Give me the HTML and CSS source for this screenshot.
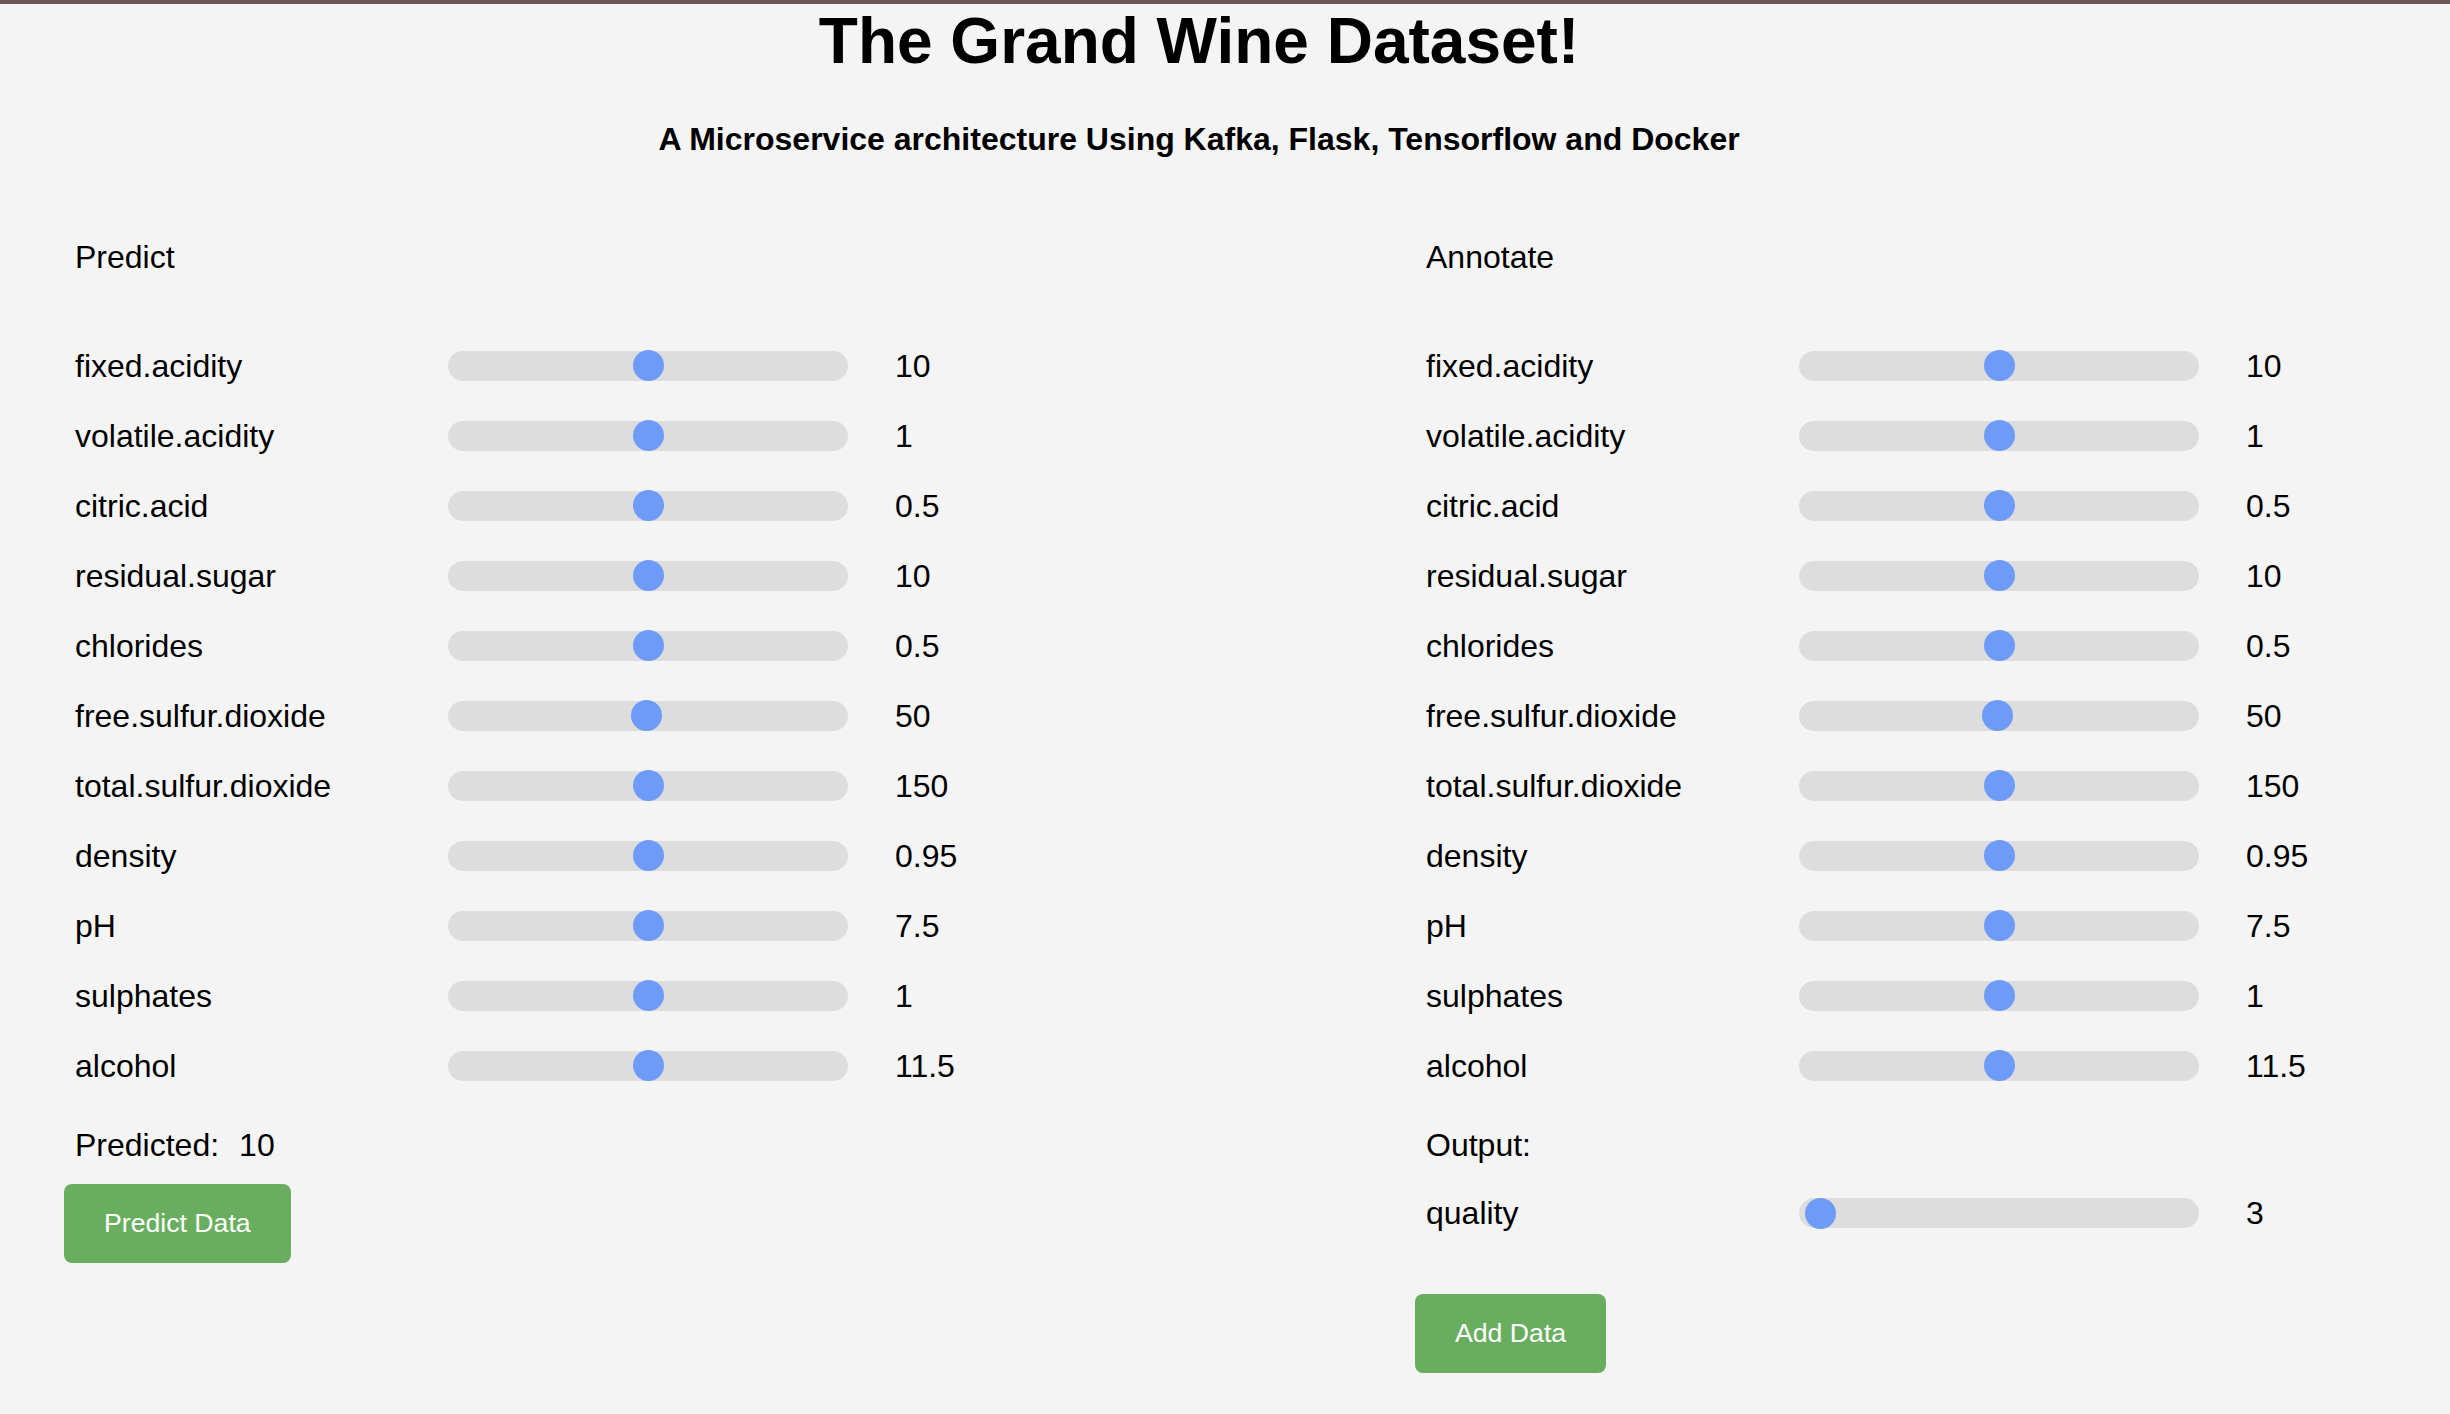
FILE: index.html
```html
<!DOCTYPE html>
<html lang="en">
<head>
<meta charset="utf-8">
<title>The Grand Wine Dataset!</title>
<link rel="stylesheet" href="styles.css">
</head>
<body>
<header class="page-header">
  <h1 class="title">The Grand Wine Dataset!</h1>
  <p class="subtitle">A Microservice architecture Using Kafka, Flask, Tensorflow and Docker</p>
</header>
<main class="panels">
  <section class="panel">
    <h2 class="panel-title">Predict</h2>
    <div class="rows">
      <div class="row"><span class="label">fixed.acidity</span><input class="slider" type="range" min="0" max="20" step="0.1" value="10"><span class="value">10</span></div>
      <div class="row"><span class="label">volatile.acidity</span><input class="slider" type="range" min="0" max="2" step="0.01" value="1"><span class="value">1</span></div>
      <div class="row"><span class="label">citric.acid</span><input class="slider" type="range" min="0" max="1" step="0.01" value="0.5"><span class="value">0.5</span></div>
      <div class="row"><span class="label">residual.sugar</span><input class="slider" type="range" min="0" max="20" step="0.1" value="10"><span class="value">10</span></div>
      <div class="row"><span class="label">chlorides</span><input class="slider" type="range" min="0" max="1" step="0.01" value="0.5"><span class="value">0.5</span></div>
      <div class="row"><span class="label">free.sulfur.dioxide</span><input class="slider" type="range" min="1" max="100" step="1" value="50"><span class="value">50</span></div>
      <div class="row"><span class="label">total.sulfur.dioxide</span><input class="slider" type="range" min="0" max="300" step="1" value="150"><span class="value">150</span></div>
      <div class="row"><span class="label">density</span><input class="slider" type="range" min="0.9" max="1" step="0.01" value="0.95"><span class="value">0.95</span></div>
      <div class="row"><span class="label">pH</span><input class="slider" type="range" min="0" max="15" step="0.1" value="7.5"><span class="value">7.5</span></div>
      <div class="row"><span class="label">sulphates</span><input class="slider" type="range" min="0" max="2" step="0.01" value="1"><span class="value">1</span></div>
      <div class="row"><span class="label">alcohol</span><input class="slider" type="range" min="8" max="15" step="0.1" value="11.5"><span class="value">11.5</span></div>
    </div>
    <p class="result">Predicted:<span class="result-value">10</span></p>
    <button class="btn btn-predict" type="button">Predict Data</button>
  </section>
  <section class="panel">
    <h2 class="panel-title">Annotate</h2>
    <div class="rows">
      <div class="row"><span class="label">fixed.acidity</span><input class="slider" type="range" min="0" max="20" step="0.1" value="10"><span class="value">10</span></div>
      <div class="row"><span class="label">volatile.acidity</span><input class="slider" type="range" min="0" max="2" step="0.01" value="1"><span class="value">1</span></div>
      <div class="row"><span class="label">citric.acid</span><input class="slider" type="range" min="0" max="1" step="0.01" value="0.5"><span class="value">0.5</span></div>
      <div class="row"><span class="label">residual.sugar</span><input class="slider" type="range" min="0" max="20" step="0.1" value="10"><span class="value">10</span></div>
      <div class="row"><span class="label">chlorides</span><input class="slider" type="range" min="0" max="1" step="0.01" value="0.5"><span class="value">0.5</span></div>
      <div class="row"><span class="label">free.sulfur.dioxide</span><input class="slider" type="range" min="1" max="100" step="1" value="50"><span class="value">50</span></div>
      <div class="row"><span class="label">total.sulfur.dioxide</span><input class="slider" type="range" min="0" max="300" step="1" value="150"><span class="value">150</span></div>
      <div class="row"><span class="label">density</span><input class="slider" type="range" min="0.9" max="1" step="0.01" value="0.95"><span class="value">0.95</span></div>
      <div class="row"><span class="label">pH</span><input class="slider" type="range" min="0" max="15" step="0.1" value="7.5"><span class="value">7.5</span></div>
      <div class="row"><span class="label">sulphates</span><input class="slider" type="range" min="0" max="2" step="0.01" value="1"><span class="value">1</span></div>
      <div class="row"><span class="label">alcohol</span><input class="slider" type="range" min="8" max="15" step="0.1" value="11.5"><span class="value">11.5</span></div>
    </div>
    <p class="result">Output:</p>
    <div class="row row-output"><span class="label">quality</span><input class="slider" type="range" min="0" max="200" step="1" value="3"><span class="value">3</span></div>
    <button class="btn btn-add" type="button">Add Data</button>
  </section>
</main>
</body>
</html>
```
FILE: styles.css
```css
html {
  background: #f4f4f4;
}

body {
  margin: 0;
  border-top: 4px solid #6b5552;
  background: #f4f4f4;
  color: #000;
  font-family: "Liberation Sans", Arial, Helvetica, sans-serif;
  font-size: 32px;
}

.page-header {
  padding-right: 52px;
  text-align: center;
}

.title {
  margin: 0;
  font-size: 64px;
  font-weight: bold;
  line-height: 74px;
}

.subtitle {
  margin: 41px 0 0;
  font-size: 32px;
  font-weight: bold;
  line-height: 40px;
}

.panels {
  display: grid;
  grid-template-columns: 1351px 1fr;
  padding-left: 64px;
  margin-top: 78px;
}

.panel {
  display: flex;
  flex-direction: column;
  align-items: flex-start;
}

.panel-title {
  margin: 0 0 53.5px;
  padding-left: 11px;
  font-size: 32px;
  font-weight: normal;
  line-height: 40px;
}

.rows {
  display: flex;
  flex-direction: column;
}

.row {
  display: grid;
  grid-template-columns: 337px 400px auto;
  column-gap: 47px;
  align-items: center;
  height: 70px;
  line-height: 40px;
}

.label {
  padding-left: 11px;
}

.slider {
  -webkit-appearance: none;
  appearance: none;
  display: block;
  width: 400px;
  height: 30px;
  margin: 0;
  padding: 0;
  border: none;
  border-radius: 15px;
  background: #dddddd;
  outline: none;
}

.slider::-webkit-slider-thumb {
  -webkit-appearance: none;
  appearance: none;
  width: 31px;
  height: 31px;
  border: none;
  border-radius: 50%;
  background: #6e9bf7;
}

.slider::-moz-range-thumb {
  width: 31px;
  height: 31px;
  border: none;
  border-radius: 50%;
  background: #6e9bf7;
}

.result {
  margin: 24px 0 0;
  padding-left: 11px;
  line-height: 40px;
}

.result-value {
  margin-left: 20px;
}

.row-output {
  margin-top: 13.5px;
}

.btn {
  border: none;
  border-radius: 8px;
  background: #69ae5f;
  color: #fff;
  font-family: "Liberation Sans", Arial, Helvetica, sans-serif;
  font-size: 26.67px;
  line-height: normal;
  padding: 24px 40px;
  cursor: pointer;
}

.btn-predict {
  margin-top: 19px;
}

.btn-add {
  margin-top: 46px;
}
```
